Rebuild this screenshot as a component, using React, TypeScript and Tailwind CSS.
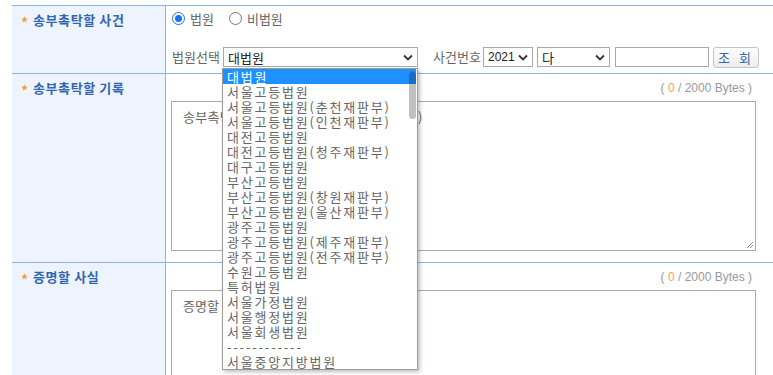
import React from "react";

// ── Data ──────────────────────────────────────────────────────────────────────

const COURTS = [
  "대법원",
  "서울고등법원",
  "서울고등법원(춘천재판부)",
  "서울고등법원(인천재판부)",
  "대전고등법원",
  "대전고등법원(청주재판부)",
  "대구고등법원",
  "부산고등법원",
  "부산고등법원(창원재판부)",
  "부산고등법원(울산재판부)",
  "광주고등법원",
  "광주고등법원(제주재판부)",
  "광주고등법원(전주재판부)",
  "수원고등법원",
  "특허법원",
  "서울가정법원",
  "서울행정법원",
  "서울회생법원",
  "------------",
  "서울중앙지방법원",
];

const FONT = { fontFamily: '"Noto Sans CJK KR", "Noto Sans", sans-serif' };
const LATIN = { fontFamily: '"Liberation Sans", "Noto Sans CJK KR", sans-serif' };

// ── Petits éléments ───────────────────────────────────────────────────────────

function Chevron() {
  return (
    <svg width="10" height="7" viewBox="0 0 10 7" className="shrink-0">
      <path d="M1 1.5 L5 5.5 L9 1.5" fill="none" stroke="#333" strokeWidth="1.8" />
    </svg>
  );
}

function FakeSelect({ value, className, latin }: { value: string; className: string; latin?: boolean }) {
  return (
    <div
      className={`h-[20px] flex items-center justify-between pl-[4px] pr-[4px] border border-[#a9a9a9] bg-white text-[#222] ${
        latin ? "text-[12px]" : "text-[13px]"
      } ${className}`}
      style={latin ? LATIN : undefined}
    >
      <span className="leading-none">{value}</span>
      <Chevron />
    </div>
  );
}

function Star() {
  return (
    <svg width="7" height="7" viewBox="0 0 10 10" className="shrink-0">
      <path d="M5 0.5 L6.3 3.7 L9.7 3.8 L7 5.9 L8 9.3 L5 7.4 L2 9.3 L3 5.9 L0.3 3.8 L3.7 3.7 Z" fill="#f5a030" />
    </svg>
  );
}

function Label({ text }: { text: string }) {
  return (
    <div className="flex items-center gap-[5px] pl-[9px] pt-[4px]">
      <Star />
      <span className="text-[13px] font-bold text-[#3366b0] tracking-[0.6px]">{text}</span>
    </div>
  );
}

function ByteCount() {
  return (
    <div className="flex justify-end pr-[21px] pt-[8px] h-[27px] text-[12px] text-[#999] leading-none" style={LATIN}>
      <span>
        ( <span className="text-[#f7a23b]">0</span> / 2000 Bytes )
      </span>
    </div>
  );
}

// ── Composant ─────────────────────────────────────────────────────────────────

export default function App() {
  return (
    <div className="relative w-[773px] h-[375px] overflow-hidden bg-white pl-[12px] pt-[5px]" style={FONT}>
      <div className="border-t border-[#8fb4e8]">
        {/* Ligne 1 : sujet */}
        <div className="flex h-[68px] border-b border-[#8fb4e8]">
          <div className="w-[154px] shrink-0 bg-[#eef4fd] border-r border-[#8fb4e8]">
            <Label text="송부촉탁할 사건" />
          </div>
          <div className="flex-1 pl-[6px] text-[13px] text-[#666]">
            <div className="flex items-center h-[13px] mt-[6px] gap-[5px]">
              <span className="w-[13px] h-[13px] rounded-full border border-[#1a73e8] flex items-center justify-center">
                <span className="w-[7px] h-[7px] rounded-full bg-[#1a73e8]" />
              </span>
              <span>법원</span>
              <span className="ml-[10px] w-[13px] h-[13px] rounded-full border border-[#767676]" />
              <span>비법원</span>
            </div>
            <div className="flex items-center mt-[22px] h-[20px]">
              <span className="w-[51px]">법원선택</span>
              <FakeSelect value="대법원" className="w-[195px]" />
              <span className="ml-[15px] w-[50px]">사건번호</span>
              <FakeSelect value="2021" className="w-[50px]" latin />
              <FakeSelect value="다" className="w-[73px] ml-[4px]" />
              <div className="w-[94px] h-[20px] ml-[5px] border border-[#a9a9a9] bg-white" />
              <button className="ml-[4px] w-[46px] h-[21px] rounded-[3px] border border-[#c4c4c4] bg-gradient-to-b from-white to-[#ececec] text-[13px] text-[#3366b0] tracking-[3px] leading-none">
                조 회
              </button>
            </div>
          </div>
        </div>

        {/* Ligne 2 : dossier */}
        <div className="flex h-[189px] border-b border-[#8fb4e8]">
          <div className="w-[154px] shrink-0 bg-[#eef4fd] border-r border-[#8fb4e8]">
            <Label text="송부촉탁할 기록" />
          </div>
          <div className="flex-1 pl-[5px]">
            <ByteCount />
            <div className="relative mr-[17px] h-[150px] border border-[#aaa] pl-[11px] pt-[5px] text-[13px] text-[#666] tracking-[0.3px] whitespace-nowrap">
              송부촉탁할 기록을 입력해 주세요(진료기록)
              <svg width="9" height="9" viewBox="0 0 9 9" className="absolute right-[1px] bottom-[1px]">
                <path d="M8 2 L2 8 M8 5 L5 8" stroke="#888" strokeWidth="1" />
              </svg>
            </div>
          </div>
        </div>

        {/* Ligne 3 : faits */}
        <div className="flex h-[120px]">
          <div className="w-[154px] shrink-0 bg-[#eef4fd] border-r border-[#8fb4e8]">
            <Label text="증명할 사실" />
          </div>
          <div className="flex-1 pl-[5px]">
            <ByteCount />
            <div className="mr-[17px] h-[100px] border border-[#aaa] pl-[11px] pt-[5px] text-[13px] text-[#666] whitespace-nowrap">
              증명할 사실을 입력하세요
            </div>
          </div>
        </div>
      </div>

      {/* Liste déroulante ouverte */}
      <div className="absolute left-[222px] top-[68px] w-[196px] h-[302px] bg-white border border-[#9a9a9a] shadow-[2px_2px_4px_rgba(0,0,0,0.25)] overflow-hidden">
        <div className="flex">
          <div className="flex-1 overflow-hidden">
            {COURTS.map((c, i) => (
              <div
                key={c}
                className={`h-[15px] pl-[4px] text-[13px] leading-[15px] tracking-[1.8px] whitespace-nowrap ${
                  i === 0 ? "bg-[#1e90ff] text-white" : "text-[#666]"
                }`}
              >
                {c}
              </div>
            ))}
          </div>
          <div className="w-[9px] shrink-0 relative">
            <div className="absolute left-0 right-[1px] top-0 h-[15px] bg-[#1e90ff]" />
            <div className="absolute left-[1px] right-[1px] top-[2px] h-[48px] rounded-[4px] bg-[#c1c1c1]" />
            <div className="absolute left-[1px] right-[1px] top-[2px] h-[13px] rounded-t-[4px] bg-[#1a6ec8]" />
          </div>
        </div>
      </div>
    </div>
  );
}
